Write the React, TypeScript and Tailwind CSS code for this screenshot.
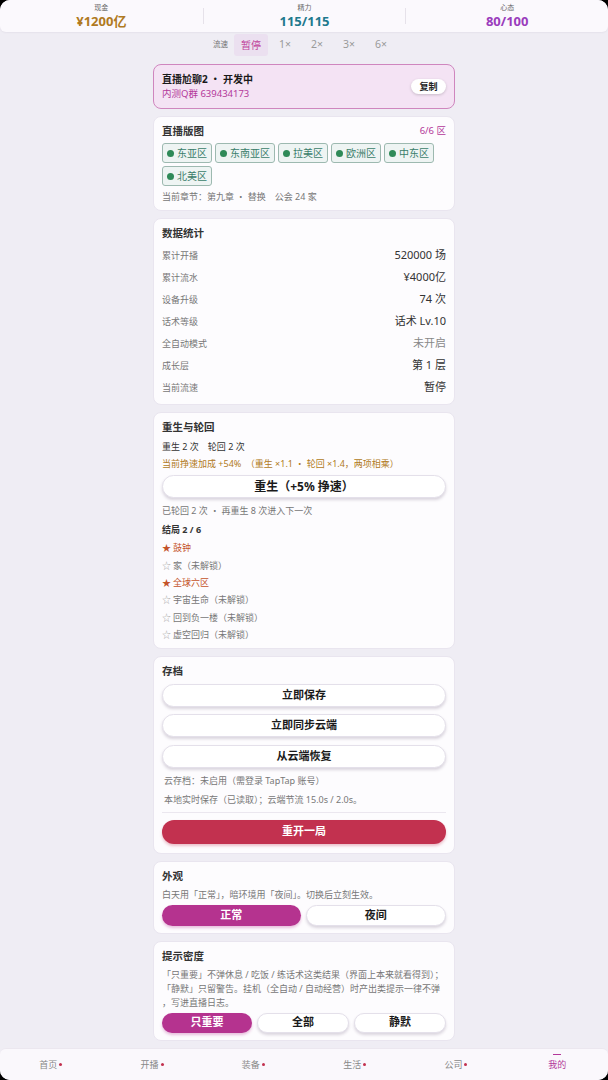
import React from "react";

const font = { fontFamily: '"Noto Sans", "Noto Sans CJK SC", sans-serif' };

function Card({ children, className = "" }: { children: React.ReactNode; className?: string }) {
  return (
    <div className={`rounded-[8px] border border-[#e9e5ef] bg-[#fdfcfe] px-2 pt-[7px] ${className}`}>{children}</div>
  );
}

function Title({ children }: { children: React.ReactNode }) {
  return <div className="text-[10.5px] font-bold leading-[14px] text-[#333]">{children}</div>;
}

function PillBtn({ children, className = "" }: { children: React.ReactNode; className?: string }) {
  return (
    <div
      className={`flex items-center justify-center rounded-full border border-[#e4e0ea] bg-white text-[11px] font-bold text-[#1a1a1a] shadow-[0_2px_3px_rgba(60,40,80,0.18)] ${className}`}
    >
      {children}
    </div>
  );
}

export default function App() {
  const regions = ["东亚区", "东南亚区", "拉美区", "欧洲区", "中东区", "北美区"];
  const stats: [string, string, boolean?][] = [
    ["累计开播", "520000 场"],
    ["累计流水", "¥4000亿"],
    ["设备升级", "74 次"],
    ["话术等级", "话术 Lv.10"],
    ["全自动模式", "未开启", true],
    ["成长层", "第 1 层"],
    ["当前流速", "暂停"],
  ];
  const endings: [string, boolean][] = [
    ["鼓钟", true],
    ["家（未解锁）", false],
    ["全球六区", true],
    ["宇宙生命（未解锁）", false],
    ["回到负一楼（未解锁）", false],
    ["虚空回归（未解锁）", false],
  ];
  return (
    <div style={font} className="h-[1080px] w-[608px] overflow-hidden bg-black">
      <div className="flex h-[1080px] flex-col overflow-hidden rounded-[10px] bg-[#efedf4]">
        {/* top stats */}
        <div className="flex h-[32px] shrink-0 items-center rounded-b-[6px] bg-[#fbf9fd] shadow-[0_1px_2px_rgba(80,60,100,0.06)]">
          {[
            ["现金", "¥1200亿", "text-[#b07a22]"],
            ["精力", "115/115", "text-[#1f7a8e]"],
            ["心态", "80/100", "text-[#9a3cbc]"],
          ].map(([l, v, c], i) => (
            <div key={l} className="flex flex-1 items-center">
              {i > 0 && <div className="h-[16px] w-px bg-[#e6e2ea]" />}
              <div className="flex flex-1 flex-col items-center leading-none">
                <div className="text-[7px] text-[#666]">{l}</div>
                <div className={`mt-[4px] text-[13px] font-bold ${c}`}>{v}</div>
              </div>
            </div>
          ))}
        </div>
        {/* speed */}
        <div className="flex h-[26px] shrink-0 items-center justify-center pr-[8px] text-[#999]">
          <span className="mr-[6px] text-[7.5px] text-[#777]">流速</span>
          <span className="flex h-[22px] items-center rounded-[3px] bg-[#ebe0f0] px-[7px] text-[10px] text-[#c0409a]">暂停</span>
          <div className="ml-[11px] flex gap-[20px]">
            {["1×", "2×", "3×", "6×"].map((s) => (
              <span key={s} className="text-[10.5px] text-[#9a9a9a]">
                {s}
              </span>
            ))}
          </div>
        </div>

        <div className="mx-auto mt-[6px] flex w-[302px] flex-col gap-[7px]">
          {/* header */}
          <div className="flex h-[45px] items-center justify-between rounded-[8px] border border-[#cf86be] bg-[#f4e3f4] px-2">
            <div className="leading-none">
              <div className="text-[10px] font-bold text-[#1a1a1a]">直播尬聊2 ・ 开发中</div>
              <div className="mt-[5px] text-[9.5px] text-[#b3389a]">内测Q群 639434173</div>
            </div>
            <div className="flex h-[15px] w-[35px] items-center justify-center rounded-full bg-white text-[9px] font-bold text-[#222] shadow-[0_1px_3px_rgba(0,0,0,0.18)]">
              复制
            </div>
          </div>

          {/* map */}
          <Card className="pb-[7px]">
            <div className="flex items-center justify-between">
              <Title>直播版图</Title>
              <div className="text-[9.5px] text-[#b3389a]">6/6 区</div>
            </div>
            <div className="mt-[5px] flex flex-wrap gap-x-[3px] gap-y-[3px]">
              {regions.map((r) => (
                <div
                  key={r}
                  className="flex h-[20px] items-center gap-[3px] rounded-[3px] border border-[#9db9b0] bg-[#eef4f3] px-[4px] text-[10px] text-[#3a7d6a]"
                >
                  <span className="h-[7px] w-[7px] rounded-full bg-[#2f8a58]" />
                  {r}
                </div>
              ))}
            </div>
            <div className="mt-[5px] text-[9px] leading-[12px] text-[#777]">当前章节：第九章 ・ 替换　公会 24 家</div>
          </Card>

          {/* stats */}
          <Card className="pb-[6px]">
            <Title>数据统计</Title>
            <div className="mt-[4px] flex flex-col">
              {stats.map(([l, v, muted]) => (
                <div key={l} className="flex h-[22px] items-center justify-between">
                  <span className="text-[9px] text-[#777]">{l}</span>
                  <span className={`text-[11px] ${muted ? "text-[#888]" : "text-[#333]"}`}>{v}</span>
                </div>
              ))}
            </div>
          </Card>

          {/* rebirth */}
          <Card className="pb-[4px]">
            <Title>重生与轮回</Title>
            <div className="mt-[7px] text-[9px] leading-[12px] text-[#333]">重生 2 次　轮回 2 次</div>
            <div className="mt-[5px] text-[9px] leading-[12px] text-[#b07a22]">当前挣速加成 +54%　（重生 ×1.1 ・ 轮回 ×1.4，两项相乘）</div>
            <PillBtn className="mt-[5px] h-[23px] text-[12px]">重生（+5% 挣速）</PillBtn>
            <div className="mt-[7px] text-[9px] leading-[12px] text-[#777]">已轮回 2 次 ・ 再重生 8 次进入下一次</div>
            <div className="mt-[7px] text-[9px] font-bold leading-[12px] text-[#333]">结局 2 / 6</div>
            <div className="mt-[3px] flex flex-col">
              {endings.map(([t, on]) => (
                <div
                  key={t}
                  className={`flex h-[17.4px] items-center text-[9px] ${on ? "text-[#c4532a]" : "text-[#777]"}`}
                >
                  <span className={`mr-[2px] ${on ? "text-[#c4532a]" : "text-[#aaa]"}`}>{on ? "★" : "☆"}</span>
                  {t}
                </div>
              ))}
            </div>
          </Card>

          {/* save */}
          <Card className="pb-[9px]">
            <Title>存档</Title>
            <div className="mt-[6px] flex flex-col gap-[7.5px]">
              <PillBtn className="h-[23px]">立即保存</PillBtn>
              <PillBtn className="h-[23px]">立即同步云端</PillBtn>
              <PillBtn className="h-[23px]">从云端恢复</PillBtn>
            </div>
            <div className="mt-[7px] px-[2px] text-[9px] leading-[12px] text-[#777]">云存档：未启用（需登录 TapTap 账号）</div>
            <div className="mt-[7px] px-[2px] text-[9px] leading-[12px] text-[#777]">本地实时保存（已读取）；云端节流 15.0s / 2.0s。</div>
            <div className="mt-[6px] h-px bg-[#ebe7ef]" />
            <div className="mt-[7px] flex h-[24px] items-center justify-center rounded-full bg-[#c2314f] text-[11px] font-bold text-white shadow-[0_2px_3px_rgba(194,49,79,0.3)]">
              重开一局
            </div>
          </Card>

          {/* appearance */}
          <Card className="pb-[7px]">
            <Title>外观</Title>
            <div className="mt-[6px] text-[9px] leading-[12px] text-[#777]">白天用「正常」，暗环境用「夜间」。切换后立刻生效。</div>
            <div className="mt-[4px] flex gap-[5px]">
              <div className="flex h-[21px] flex-1 items-center justify-center rounded-full bg-[#b5338f] text-[11px] font-bold text-white shadow-[0_2px_3px_rgba(181,51,143,0.3)]">
                正常
              </div>
              <PillBtn className="h-[21px] flex-1">夜间</PillBtn>
            </div>
          </Card>

          {/* tips */}
          <Card className="pb-[7px]">
            <Title>提示密度</Title>
            <div className="mt-[5px] text-[9px] leading-[14px] text-[#777]">
              「只重要」不弹休息 / 吃饭 / 练话术这类结果（界面上本来就看得到）；
              <br />
              「静默」只留警告。挂机（全自动 / 自动经营）时产出类提示一律不弹
              <br />
              ，写进直播日志。
            </div>
            <div className="mt-[3px] flex gap-[5px]">
              <div className="flex h-[20px] flex-1 items-center justify-center rounded-full bg-[#b5338f] text-[11px] font-bold text-white shadow-[0_2px_3px_rgba(181,51,143,0.3)]">
                只重要
              </div>
              <PillBtn className="h-[20px] flex-1">全部</PillBtn>
              <PillBtn className="h-[20px] flex-1">静默</PillBtn>
            </div>
          </Card>
        </div>

        <div className="flex-1" />
        {/* bottom nav */}
        <div className="flex h-[32px] shrink-0 items-center rounded-t-[6px] border-t border-[#ebe7ef] bg-[#faf8fc]">
          {["首页", "开播", "装备", "生活", "公司"].map((t) => (
            <div key={t} className="flex flex-1 items-center justify-center text-[9px] text-[#888]">
              {t}
              <span className="ml-[2px] h-[3px] w-[3px] rounded-full bg-[#c2314f]" />
            </div>
          ))}
          <div className="relative flex flex-1 items-center justify-center text-[9px] text-[#b3389a]">
            <span className="absolute top-[-4px] h-[1.5px] w-[8px] bg-[#b3389a]" />
            我的
          </div>
        </div>
      </div>
    </div>
  );
}
